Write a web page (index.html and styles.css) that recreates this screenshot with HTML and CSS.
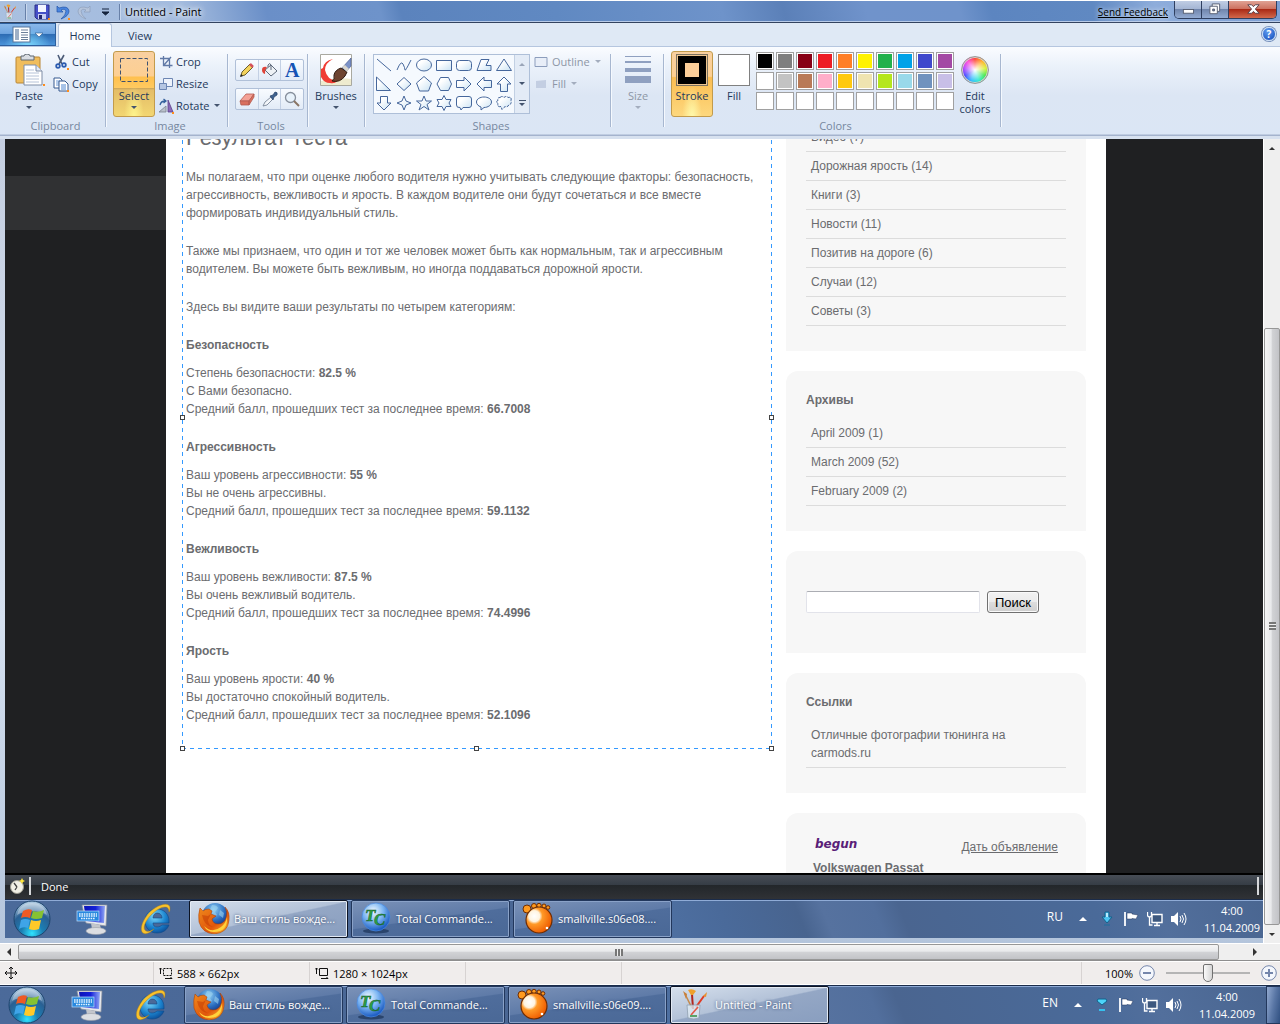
FILE: index.html
```
<!DOCTYPE html>
<html lang="en">
<head>
    <meta charset="UTF-8">
    <meta name="viewport" content="width=device-width, initial-scale=1.0">
    <title>Untitled - Paint</title>
    <link rel="stylesheet" href="styles.css">
</head>
<body>
    <!-- shared icons -->
    <svg class="sprites" aria-hidden="true">
        <defs>
            <radialGradient id="gOrb" cx="50%" cy="90%" r="85%">
                <stop offset="0" stop-color="#2fe4ff"/><stop offset=".35" stop-color="#1b7fb4"/><stop offset=".7" stop-color="#2a5f92"/><stop offset="1" stop-color="#a9c6de"/>
            </radialGradient>
            <linearGradient id="gScreen" x1="0" y1="0" x2="1" y2="0">
                <stop offset="0" stop-color="#0a14b8"/><stop offset=".55" stop-color="#1420d8"/><stop offset="1" stop-color="#8fa6f4"/>
            </linearGradient>
            <radialGradient id="gIe" cx="40%" cy="30%" r="75%">
                <stop offset="0" stop-color="#7fd8fa"/><stop offset=".6" stop-color="#1d86d0"/><stop offset="1" stop-color="#0b4d98"/>
            </radialGradient>
            <radialGradient id="gGlobe" cx="45%" cy="25%" r="70%">
                <stop offset="0" stop-color="#8fd0f4"/><stop offset=".6" stop-color="#2a6dc0"/><stop offset="1" stop-color="#14307c"/>
            </radialGradient>
            <linearGradient id="gFox" x1="0" y1="0" x2="1" y2="1">
                <stop offset="0" stop-color="#f08a1c"/><stop offset=".6" stop-color="#e0560c"/><stop offset="1" stop-color="#ffc832"/>
            </linearGradient>
            <radialGradient id="gTc" cx="40%" cy="30%" r="70%">
                <stop offset="0" stop-color="#f4fbff"/><stop offset=".5" stop-color="#7fb8f4"/><stop offset="1" stop-color="#1858c0"/>
            </radialGradient>
            <radialGradient id="gGom" cx="32%" cy="35%" r="70%">
                <stop offset="0" stop-color="#fff"/><stop offset=".3" stop-color="#fff4e0"/><stop offset=".45" stop-color="#ff9a28"/><stop offset="1" stop-color="#ee5c00"/>
            </radialGradient>
            <linearGradient id="gShape" x1="0" y1="0" x2="1" y2="1">
                <stop offset=".3" stop-color="#fff"/><stop offset="1" stop-color="#c9e2f3"/>
            </linearGradient>
        </defs>

        <symbol id="i-start" viewBox="0 0 38 38">
            <circle cx="19" cy="19" r="18" fill="url(#gOrb)" stroke="#1d456e"/>
            <path d="M4 15C6 6 12 3 19 3s13 3 15 12c-8-5-22-5-30 0z" fill="#fff" opacity=".35"/>
            <path d="M10 11q5-3 9-1l-2 8q-5-2-9 0z" fill="#ee5a24"/>
            <path d="M20 11q5 2 11-1l-2 8q-6 2-11 0z" fill="#86c232"/>
            <path d="M8 20q4-2 9 0l-2 8q-5-2-9 1z" fill="#3fa4e8"/>
            <path d="M18 20q5 2 10 0l-2 9q-5 2-10 0z" fill="#ffc928"/>
        </symbol>
        <symbol id="i-keys" viewBox="0 0 32 32">
            <path d="M6 2l25 0-1 21-20-3z" fill="#e6e8ec" stroke="#8b919c" stroke-width=".7"/>
            <path d="M8 3l21 0-1 17-18-2z" fill="url(#gScreen)"/>
            <path d="M15 20l9 2 1 4h-9z" fill="#c3c6cc"/>
            <ellipse cx="20" cy="28" rx="10" ry="3.500" fill="#dcdee2" stroke="#9a9ea6" stroke-width=".6"/>
            <rect x="1" y="8" width="22" height="10" fill="#2888de" stroke="#bfe0ff" stroke-width=".7"/>
            <path d="M3 11h18M3 13h18M5 15.500h14" stroke="#e5f4ff" stroke-width="1.300" stroke-dasharray="1.600 .8"/>
        </symbol>
        <symbol id="i-ie" viewBox="0 0 32 32">
            <path fill-rule="evenodd" fill="url(#gIe)" stroke="#0d4a8a" stroke-width=".6" d="M17 6c7 0 12 5 12 12v2H13c0 3 2 4 4 4 2 0 4-1 5-2h7c-2 5-6 8-12 8C10 30 5 25 5 18S10 6 17 6zm-4 9h9c0-3-2-5-5-5-2 0-4 2-4 5z"/>
            <path d="M3 30c-5-4 2-19 12-25C23 0 30 0 30 5c0 1 0 3-1 4 0-3-1-5-4-5-4 0-9 3-14 8C5 18 2 26 6 28c2 1 5 0 8-2-3 3-8 6-11 4z" fill="#f8c22c" stroke="#b57d0c" stroke-width=".4"/>
        </symbol>
        <symbol id="i-firefox" viewBox="0 0 32 32">
            <circle cx="17" cy="14" r="13" fill="url(#gGlobe)"/>
            <path d="M14 3q5 0 6 3l-3 4 2 3-3 2-5-5zM22 8l4 3-1 5-4-3z" fill="#9cd2ef" opacity=".6"/>
            <path d="M2 6l3 3q2-2 6-2l3 2-1 3 5 2-4 3q1 5 6 5 6 0 8-6 2-6-1-11 5 5 4 13-1 13-15 14Q4 31 1 20 0 12 2 6z" fill="url(#gFox)" stroke="#a63800" stroke-width=".5"/>
            <path d="M6 24q8 8 17 1 5-4 6-10 1 15-13 15-7 0-10-6z" fill="#ffd23c"/>
            <path d="M4 13l6 1 3-2-3 6q0 5 5 7-9-1-11-12z" fill="#c23c04" opacity=".55"/>
        </symbol>
        <symbol id="i-gom" viewBox="0 0 32 32">
            <g fill="#ff9a1e" stroke="#6e2d04" stroke-width="1"><circle cx="5" cy="7" r="4"/><circle cx="12" cy="4" r="2.500"/><circle cx="17" cy="3.500" r="2.200"/><circle cx="22" cy="4" r="2"/><circle cx="26" cy="5.500" r="1.800"/></g>
            <circle cx="17" cy="18" r="13" fill="url(#gGom)" stroke="#6e2d04" stroke-width="1.200"/>
            <circle cx="25" cy="26" r="1.300" fill="#fff"/>
        </symbol>
        <symbol id="i-paint" viewBox="0 0 32 32">
            <path d="M6 6l7 14" stroke="#c58a4c" stroke-width="1.600"/><path d="M4 3l4 3-1 5z" fill="#c9803c"/>
            <path d="M13 6l1 15" stroke="#b3261e" stroke-width="2"/><path d="M9 2q4-2 8 1l-3 4h-2z" fill="#efa02c"/>
            <path d="M25 8l-8 11" stroke="#e03a24" stroke-width="2"/><path d="M28 4l-1 5-3-1z" fill="#e8902c"/>
            <path d="M8 17h13l-1 13q-5 2-11 0z" fill="#dfeaf2" fill-opacity=".8" stroke="#8fa0b0" stroke-width=".8"/>
            <path d="M12 27l7-8" stroke="#e25848" stroke-width="1.600"/><path d="M11 28h7" stroke="#5ba368" stroke-width="2"/>
        </symbol>
        <symbol id="i-flag" viewBox="0 0 16 16">
            <path d="M2 1v14" stroke="#fff" stroke-width="1.800"/>
            <path d="M4 2h5v1l6 1-2 4-4-.5V8H4z" fill="#fff" stroke="#22365c" stroke-width=".5"/>
        </symbol>
        <symbol id="i-net" viewBox="0 0 16 16">
            <path d="M5 3.500h10v8H5z" fill="#3d587f" stroke="#fff" stroke-width="1.400"/>
            <path d="M7 14.500h6M10 12v2" stroke="#fff" stroke-width="1.400"/>
            <path d="M.5 1v3q0 2 2 2t2-2V1M2.500 6v8h3" fill="none" stroke="#fff" stroke-width="1.300"/>
        </symbol>
        <symbol id="i-sound" viewBox="0 0 16 16">
            <path d="M0 5h3l4-4v14l-4-4H0z" fill="#fff"/>
            <path d="M9 5q2 3 0 6M11 4q3 4 0 8M13 2q4 6 0 12" fill="none" stroke="#fff" stroke-width="1"/>
        </symbol>
        <symbol id="i-down" viewBox="0 0 16 16">
            <path d="M6 1h4v5h3l-5 6-5-6h3z" fill="#4cc4f2" stroke="#14628c"/><path d="M7 2h2v4H7z" fill="#b9ecff"/>
            <path d="M5 14h6" stroke="#1d6f9e"/>
        </symbol>
        <symbol id="i-funnel" viewBox="0 0 16 16">
            <path d="M4 2h8l1 2-5 4-5-4z" fill="#4cd4fa" stroke="#14628c"/><path d="M5 12h6v2H5z" fill="#35c0ee"/>
        </symbol>
    </svg>

    <header class="titlebar">
        <svg class="icon-16" viewBox="0 0 32 32"><use href="#i-paint"/></svg>
        <span class="title-sep"></span>
        <button class="quick" aria-label="Save">
            <svg class="icon-16" viewBox="0 0 16 16"><path d="M1 1h14v14H3l-2-2z" fill="#4650c8" stroke="#2a2f86"/><path d="M4 1h8v7H4z" fill="#f3f5ff"/><path d="M4 10h8v5H4z" fill="#c8cdf2"/><path d="M5 11h3v4H5z" fill="#23286e"/><path d="M14 14h2v2h-2z" fill="#ff8c1a"/></svg>
        </button>
        <button class="quick" aria-label="Undo">
            <svg class="icon-16" viewBox="0 0 16 16"><path d="M2 2v6h6L6 6q4-2 5 1 0 4-5 8 8-3 8-8-1-6-10-3z" fill="#4a86e0" stroke="#2454a8" stroke-width=".7"/><path d="M13 14h2v2h-2z" fill="#ff8c1a"/></svg>
        </button>
        <button class="quick" aria-label="Redo">
            <svg class="icon-16" viewBox="0 0 16 16"><path d="M14 2v6H8l2-2Q6 4 5 7q0 4 5 8-8-3-8-8 1-6 10-3z" fill="#b6c5dc" stroke="#8e9fba" stroke-width=".7"/></svg>
        </button>
        <button class="quick" aria-label="Customize toolbar">
            <svg class="icon-16" viewBox="0 0 16 16"><path d="M5 5h7M5 8h7L8.500 11z" stroke="#14233c" fill="#14233c"/></svg>
        </button>
        <span class="title-sep"></span>
        <h1 class="title">Untitled - Paint</h1>
        <a class="feedback" href="#feedback">Send Feedback</a>
        <div class="win-buttons">
            <button aria-label="Minimize"><svg viewBox="0 0 28 18"><rect x="9" y="9" width="11" height="4" fill="#fff" stroke="#555d70"/></svg></button>
            <button aria-label="Restore"><svg viewBox="0 0 28 18"><path d="M11 3h8v8h-8z" fill="#fff" stroke="#555d70"/><path d="M8.500 5.500h8v8h-8z" fill="#fff" stroke="#555d70"/><path d="M11.500 8.500h2v2h-2z" fill="#7488ae" stroke="#555d70"/></svg></button>
            <button class="close" aria-label="Close"><svg viewBox="0 0 48 18"><path d="M19 4h4l2 2 2-2h4l-4 4.500 4 4.500h-4l-2-2-2 2h-4l4-4.500z" fill="#fff" stroke="#56404a"/></svg></button>
        </div>
    </header>

    <nav class="tabs">
        <button class="app-menu" aria-label="Paint menu">
            <svg viewBox="0 0 32 18"><rect x="1" y="1" width="17" height="15" fill="#fff" stroke="#55749c"/><path d="M3 3h4v11H3z" fill="#9fb0c6"/><path d="M9 4h7M9 6.500h7M9 9h7M9 11.500h7M9 13.500h7" stroke="#6c7f99"/><path d="M23 7h8l-4 4z" fill="#fff" stroke="#27548c" stroke-width=".6"/></svg>
        </button>
        <button class="tab active">Home</button>
        <button class="tab">View</button>
        <button class="help" aria-label="Help">?</button>
    </nav>

    <section class="ribbon">
        <div class="group clipboard">
            <div class="group-body">
                <button class="big">
                    <svg class="icon-32" viewBox="0 0 32 32"><rect x="3" y="3" width="24" height="26" rx="1" fill="#f0bd5c" stroke="#b98635"/><path d="M8 5V2h3q0-2 3-2t3 2h4v4H8z" fill="#d9dde3" stroke="#5f6872"/><path d="M11 11h12l6 6v14H11z" fill="#fff" stroke="#7e8da6"/><path d="M23 11v6h6" fill="#e3eaf4" stroke="#7e8da6"/><path d="M13 16h8M13 19h13M13 22h13M13 25h13M13 28h13" stroke="#b6c3d8"/><path d="M30 30h2v2h-2z" fill="#ff8c1a"/></svg>
                    <span>Paste</span><i class="arrow"></i>
                </button>
                <div class="smalls">
                    <button class="small"><svg class="icon-16" viewBox="0 0 16 16"><path d="M5 1l4 9M11 1L6 10" stroke="#4c5c78" stroke-width="1.600"/><circle cx="5" cy="12" r="1.800" fill="none" stroke="#2c5cb0" stroke-width="1.800"/><circle cx="11" cy="11" r="1.800" fill="none" stroke="#2c5cb0" stroke-width="1.800"/><path d="M14 14h2v2h-2z" fill="#ff8c1a"/></svg>Cut</button>
                    <button class="small"><svg class="icon-16" viewBox="0 0 16 16"><path d="M1 2h6l2 2v8H1z" fill="#fff" stroke="#35598f"/><path d="M3 5h4M3 7h4M3 9h4" stroke="#6c9ad8"/><path d="M6 5h6l3 3v7H6z" fill="#fff" stroke="#35598f"/><path d="M8 9h5M8 11h5M8 13h5" stroke="#4f86d0"/><path d="M14 14h2v2h-2z" fill="#ff8c1a"/></svg>Copy</button>
                </div>
            </div>
            <div class="group-label">Clipboard</div>
        </div>
        <div class="sep"></div>

        <div class="group image">
            <div class="group-body">
                <button class="big split pressed">
                    <svg class="icon-32" viewBox="0 0 32 32"><rect x="2.500" y="4.500" width="27" height="23" fill="none" stroke="#3d5170" stroke-dasharray="4 2"/></svg>
                    <span>Select</span><i class="arrow"></i>
                </button>
                <div class="smalls">
                    <button class="small"><svg class="icon-16" viewBox="0 0 16 16"><path d="M5.500 2v9.500h9M2 4.500h9.500V14M6 11l7-8" fill="none" stroke="#6079a6" stroke-width="1.300"/></svg>Crop</button>
                    <button class="small"><svg class="icon-16" viewBox="0 0 16 16"><path d="M5.500 2.500h9v8h-9z" fill="#eef3fb" stroke="#6d86b3"/><path d="M1.500 7.500h7v6h-7z" fill="#b5c6e2" stroke="#6d86b3"/></svg>Resize</button>
                    <button class="small"><svg class="icon-16" viewBox="0 0 16 16"><path d="M8 14V8l-7 6z" fill="#b9c0ca" stroke="#78818e" stroke-width=".8"/><path d="M10 14V2l5 12z" fill="#8b6ab8" stroke="#59408a" stroke-width=".8"/><path d="M2 7q1-4 5-4M5.500 1l2.500 2-2.500 2" fill="none" stroke="#34609c" stroke-width="1.300"/><path d="M14 14h2v2h-2z" fill="#ff8c1a"/></svg>Rotate<i class="arrow"></i></button>
                </div>
            </div>
            <div class="group-label">Image</div>
        </div>
        <div class="sep"></div>

        <div class="group tools">
            <div class="group-body">
                <div class="tool-row">
                    <button aria-label="Pencil"><svg class="icon-16" viewBox="0 0 16 16"><path d="M2 14l1-4 8-8 3 3-8 8z" fill="#f3d35c" stroke="#6b5f2d"/><path d="M11 2l3 3" stroke="#d4525c" stroke-width="2.500"/><path d="M1 15l1-3 2 2z" fill="#222"/></svg></button>
                    <button aria-label="Fill with color"><svg class="icon-16" viewBox="0 0 16 16"><path d="M9 3l6 6-6 5-6-6z" fill="#eef2f6" stroke="#5f6b7c"/><path d="M9 8V3q-1-3-3 0v2" fill="none" stroke="#5f6b7c"/><path d="M0 8q0-4 5-3-2 2-2 7-3-1-3-4z" fill="#e0443a"/></svg></button>
                    <button aria-label="Text"><span class="text-tool">A</span></button>
                </div>
                <div class="tool-row">
                    <button aria-label="Eraser"><svg class="icon-16" viewBox="0 0 16 16"><path d="M1 10l6-7h8l-5 7z" fill="#f4a196" stroke="#b45c50" stroke-width=".8"/><path d="M1 10h9v4H2zM10 10l5-7v3l-5 8z" fill="#d9705f" stroke="#b45c50" stroke-width=".8"/></svg></button>
                    <button aria-label="Color picker"><svg class="icon-16" viewBox="0 0 16 16"><path d="M1 15l2-4 6-5 2 2-6 6z" fill="#f3f6fa" stroke="#7a8798" stroke-width=".9"/><path d="M8 5l3-1 2-3q3 0 2 3l-3 2-1 3z" fill="#3f628f" stroke="#274268" stroke-width=".7"/></svg></button>
                    <button aria-label="Magnifier"><svg class="icon-16" viewBox="0 0 16 16"><circle cx="6.500" cy="6.500" r="5" fill="#e8f2fb" stroke="#868f9c" stroke-width="1.300"/><path d="M10 10l5 5" stroke="#8a7565" stroke-width="2"/></svg></button>
                </div>
            </div>
            <div class="group-label">Tools</div>
        </div>
        <div class="sep"></div>

        <div class="group brushes">
            <div class="group-body">
                <button class="big">
                    <svg class="icon-32" viewBox="0 0 32 32"><path d="M.5.500h31v31H.5z" fill="#fff" stroke="#a9a9a0"/><path d="M1 27q15-4 30-2v6H1z" fill="#eeebcf"/><path d="M13 5Q4 7 3 14l-2 1v8q3 6 9 6 5 1 7-2Q7 26 5 16q0-7 8-11z" fill="#f03c34"/><path d="M31 4v8l-5 6-4-4z" fill="#7c93c8" stroke="#3f548c" stroke-width=".6"/><path d="M21 14l6 4-2 4q-5 7-13 5 3-2 2-6 1-5 7-7z" fill="#6e4430" stroke="#2e1a10"/><path d="M22 13l5 5 2-3-4-4z" fill="#d8d5cd"/></svg>
                    <span>Brushes</span><i class="arrow"></i>
                </button>
            </div>
        </div>
        <div class="sep"></div>

        <div class="group shapes">
            <div class="group-body">
                <div class="gallery">
                    <div class="shape-grid">
                        <button aria-label="Line"><svg viewBox="0 0 18 18"><path d="M2 3l14 12"/></svg></button>
                        <button aria-label="Curve"><svg viewBox="0 0 18 18"><path fill="none" d="M2 14Q6 4 8 8t2 6 6-10"/></svg></button>
                        <button aria-label="Oval"><svg viewBox="0 0 18 18"><ellipse cx="9" cy="9" rx="7.500" ry="6"/></svg></button>
                        <button aria-label="Rectangle"><svg viewBox="0 0 18 18"><path d="M1.500 4.500h15v10h-15z"/></svg></button>
                        <button aria-label="Rounded rectangle"><svg viewBox="0 0 18 18"><rect x="1.500" y="4.500" width="15" height="10" rx="3"/></svg></button>
                        <button aria-label="Polygon"><svg viewBox="0 0 18 18"><path d="M2 14.500L6 3.500h8L11 9.500h5v5z"/></svg></button>
                        <button aria-label="Triangle"><svg viewBox="0 0 18 18"><path d="M9 3l7.500 11.500h-15z"/></svg></button>
                        <button aria-label="Right triangle"><svg viewBox="0 0 18 18"><path d="M1.500 2v13.500h14z"/></svg></button>
                        <button aria-label="Diamond"><svg viewBox="0 0 18 18"><path d="M9 2.500L16 9l-7 6.500L2 9z"/></svg></button>
                        <button aria-label="Pentagon"><svg viewBox="0 0 18 18"><path d="M9 1.500L16.500 8l-3 8h-9l-3-8z"/></svg></button>
                        <button aria-label="Hexagon"><svg viewBox="0 0 18 18"><path d="M5.500 2.500h8L16.500 9l-3 6.500h-8L2 9z"/></svg></button>
                        <button aria-label="Right arrow"><svg viewBox="0 0 18 18"><path d="M1.500 5.500H9V2l7 7-7 7v-3.500H1.500z"/></svg></button>
                        <button aria-label="Left arrow"><svg viewBox="0 0 18 18"><path d="M16.500 5.500H9V2L2 9l7 7v-3.500h7.500z"/></svg></button>
                        <button aria-label="Up arrow"><svg viewBox="0 0 18 18"><path d="M5.500 16.500V9H2l7-7 7 7h-3.500v7.500z"/></svg></button>
                        <button aria-label="Down arrow"><svg viewBox="0 0 18 18"><path d="M5.500 2.500V9H2l7 7 7-7h-3.500V2.500z"/></svg></button>
                        <button aria-label="Four-point star"><svg viewBox="0 0 18 18"><path d="M9 2l2 5 5 2-5 2-2 5-2-5-5-2 5-2z"/></svg></button>
                        <button aria-label="Five-point star"><svg viewBox="0 0 18 18"><path d="M9 2l2 5h5.500L12 10.500l2 5.500-5-3.500L4 16l2-5.500L1.500 7H7z"/></svg></button>
                        <button aria-label="Six-point star"><svg viewBox="0 0 18 18"><path d="M9 1.500l2 4h5L14 9l2 3.500h-5l-2 4-2-4H2L4 9 2 5.500h5z"/></svg></button>
                        <button aria-label="Rounded callout"><svg viewBox="0 0 18 18"><path d="M4 2.500h10q2.500 0 2.500 2.500v6q0 2.500-2.500 2.500H8L6 16l-1-2.500Q1.500 14 1.500 11V5Q1.500 2.500 4 2.500z"/></svg></button>
                        <button aria-label="Oval callout"><svg viewBox="0 0 18 18"><path d="M9 3c4 0 7.500 2 7.500 5S13 13.500 9 13.500L6 16v-3C3 12 1.500 10 1.500 8 1.500 5 5 3 9 3z"/></svg></button>
                        <button aria-label="Cloud callout"><svg viewBox="0 0 18 18"><path stroke-dasharray="3 1" d="M5 3.500q2-2 4 0 2-2 4 0 4-1 3 3 1 4-2 4-1 3-4 2-2 2-3 3l-1-3q-4 1-3-3-3-2 0-3-1-3 2-3z"/></svg></button>
                    </div>
                    <div class="gallery-scroll">
                        <button aria-label="Scroll up"><i class="arrow up"></i></button>
                        <button aria-label="Scroll down"><i class="arrow"></i></button>
                        <button class="more" aria-label="More shapes"><i class="arrow"></i></button>
                    </div>
                </div>
                <div class="smalls disabled">
                    <button class="small" disabled><svg class="icon-16" viewBox="0 0 16 16"><path d="M2 3.500h12v9H2z" fill="#e8eef8" stroke="#8c9dbc"/></svg>Outline<i class="arrow"></i></button>
                    <button class="small" disabled><svg class="icon-16" viewBox="0 0 16 16"><path d="M3 5l10-1v8H3z" fill="#c3cee2"/></svg>Fill<i class="arrow"></i></button>
                </div>
            </div>
            <div class="group-label">Shapes</div>
        </div>
        <div class="sep"></div>

        <div class="group size">
            <div class="group-body">
                <button class="big disabled" disabled>
                    <svg class="icon-32" viewBox="0 0 32 32"><path d="M3 2h26v1H3zM3 7h26v2H3zM3 14h26v4H3zM3 22h26v7H3z" fill="#8fa0c0"/></svg>
                    <span>Size</span><i class="arrow"></i>
                </button>
            </div>
        </div>
        <div class="sep"></div>

        <div class="group colors">
            <div class="group-body">
                <button class="big pressed"><i class="well stroke-well"></i><span>Stroke</span></button>
                <button class="big"><i class="well"></i><span>Fill</span></button>
                <div class="palette">
                    <button class="swatch black" aria-label="Black"></button>
                    <button class="swatch gray" aria-label="Gray"></button>
                    <button class="swatch darkred" aria-label="Dark red"></button>
                    <button class="swatch red" aria-label="Red"></button>
                    <button class="swatch orange" aria-label="Orange"></button>
                    <button class="swatch yellow" aria-label="Yellow"></button>
                    <button class="swatch green" aria-label="Green"></button>
                    <button class="swatch turquoise" aria-label="Turquoise"></button>
                    <button class="swatch indigo" aria-label="Indigo"></button>
                    <button class="swatch purple" aria-label="Purple"></button>
                    <button class="swatch" aria-label="White"></button>
                    <button class="swatch lightgray" aria-label="Light gray"></button>
                    <button class="swatch brown" aria-label="Brown"></button>
                    <button class="swatch rose" aria-label="Rose"></button>
                    <button class="swatch gold" aria-label="Gold"></button>
                    <button class="swatch tan" aria-label="Light yellow"></button>
                    <button class="swatch lime" aria-label="Lime"></button>
                    <button class="swatch lightblue" aria-label="Light turquoise"></button>
                    <button class="swatch bluegray" aria-label="Blue-gray"></button>
                    <button class="swatch lavender" aria-label="Lavender"></button>
                    <button class="swatch" aria-label="Custom 1"></button>
                    <button class="swatch" aria-label="Custom 2"></button>
                    <button class="swatch" aria-label="Custom 3"></button>
                    <button class="swatch" aria-label="Custom 4"></button>
                    <button class="swatch" aria-label="Custom 5"></button>
                    <button class="swatch" aria-label="Custom 6"></button>
                    <button class="swatch" aria-label="Custom 7"></button>
                    <button class="swatch" aria-label="Custom 8"></button>
                    <button class="swatch" aria-label="Custom 9"></button>
                    <button class="swatch" aria-label="Custom 10"></button>
                </div>
                <button class="big"><i class="wheel"></i><span>Edit<br>colors</span></button>
            </div>
            <div class="group-label">Colors</div>
        </div>
        <div class="sep"></div>
    </section>

    <main class="workspace">
        <div class="canvas">
            <div class="page">
                <div class="side-band"></div>
                <div class="site">
                    <article class="article">
                        <h2>Результат теста</h2>
                        <p>Мы полагаем, что при оценке любого водителя нужно учитывать следующие факторы: безопасность, агрессивность, вежливость и ярость. В каждом водителе они будут сочетаться и все вместе формировать индивидуальный стиль.</p>
                        <p>Также мы признаем, что один и тот же человек может быть как нормальным, так и агрессивным водителем. Вы можете быть вежливым, но иногда поддаваться дорожной ярости.</p>
                        <p>Здесь вы видите ваши результаты по четырем категориям:</p>
                        <h3>Безопасность</h3>
                        <p>Степень безопасности: <b>82.5 %</b><br>С Вами безопасно.<br>Средний балл, прошедших тест за последнее время: <b>66.7008</b></p>
                        <h3>Агрессивность</h3>
                        <p>Ваш уровень агрессивности: <b>55 %</b><br>Вы не очень агрессивны.<br>Средний балл, прошедших тест за последнее время: <b>59.1132</b></p>
                        <h3>Вежливость</h3>
                        <p>Ваш уровень вежливости: <b>87.5 %</b><br>Вы очень вежливый водитель.<br>Средний балл, прошедших тест за последнее время: <b>74.4996</b></p>
                        <h3>Ярость</h3>
                        <p>Ваш уровень ярости: <b>40 %</b><br>Вы достаточно спокойный водитель.<br>Средний балл, прошедших тест за последнее время: <b>52.1096</b></p>
                        <div class="selection">
                            <i class="handle left-mid"></i><i class="handle right-mid"></i>
                            <i class="handle left-bottom"></i><i class="handle mid-bottom"></i><i class="handle right-bottom"></i>
                        </div>
                    </article>
                    <aside class="sidebar">
                        <section class="panel continued">
                            <ul>
                                <li>Видео (7)</li>
                                <li>Дорожная ярость (14)</li>
                                <li>Книги (3)</li>
                                <li>Новости (11)</li>
                                <li>Позитив на дороге (6)</li>
                                <li>Случаи (12)</li>
                                <li>Советы (3)</li>
                            </ul>
                        </section>
                        <section class="panel">
                            <h4>Архивы</h4>
                            <ul>
                                <li>April 2009 (1)</li>
                                <li>March 2009 (52)</li>
                                <li>February 2009 (2)</li>
                            </ul>
                        </section>
                        <form class="panel search">
                            <input type="text" aria-label="Поиск">
                            <button type="button">Поиск</button>
                        </form>
                        <section class="panel">
                            <h4>Ссылки</h4>
                            <ul>
                                <li>Отличные фотографии тюнинга на carmods.ru</li>
                            </ul>
                        </section>
                        <section class="panel ads">
                            <div class="ads-head">
                                <span class="begun">begun</span>
                                <a href="#ad">Дать объявление</a>
                            </div>
                            <a class="ad-title" href="#passat">Volkswagen Passat</a>
                        </section>
                    </aside>
                </div>
            </div>
            <div class="browser-status">
                <svg class="icon-16" viewBox="0 0 16 16"><circle cx="8" cy="9" r="6.500" fill="#f2f0e6" stroke="#9b9a90"/><path d="M8 9L5 5M8 9l-2 3" stroke="#444" stroke-width="1.300"/><path d="M13 0l1 2 2 1-2 1-1 2-1-2-2-1 2-1z" fill="#ffe63c"/></svg>
                <span class="bar"></span>
                <span class="status-text">Done</span>
                <span class="bar"></span>
            </div>
            <div class="taskbar inner">
                <button class="pin" aria-label="Start"><svg class="orb" viewBox="0 0 38 38"><use href="#i-start"/></svg></button>
                <button class="pin" aria-label="On-screen keyboard"><svg viewBox="0 0 32 32"><use href="#i-keys"/></svg></button>
                <button class="pin" aria-label="Internet Explorer"><svg viewBox="0 0 32 32"><use href="#i-ie"/></svg></button>
                <button class="task active"><svg viewBox="0 0 32 32"><use href="#i-firefox"/></svg>Ваш стиль вожде...</button>
                <button class="task">
                    <svg viewBox="0 0 32 32"><ellipse cx="16" cy="29" rx="13" ry="2.500" fill="#12294d" opacity=".6"/><circle cx="16" cy="15" r="14" fill="url(#gTc)" stroke="#4a8ade" stroke-width=".7"/><text x="5" y="19" class="tc-letter">T</text><text x="14" y="23" class="tc-letter">C</text></svg>
                    Total Commande...
                </button>
                <button class="task"><svg viewBox="0 0 32 32"><use href="#i-gom"/></svg>smallville.s06e08....</button>
                <div class="tray">
                    <span class="lang">RU</span>
                    <i class="tray-arrow"></i>
                    <svg viewBox="0 0 16 16"><use href="#i-down"/></svg>
                    <svg viewBox="0 0 16 16"><use href="#i-flag"/></svg>
                    <svg viewBox="0 0 16 16"><use href="#i-net"/></svg>
                    <svg viewBox="0 0 16 16"><use href="#i-sound"/></svg>
                    <div class="clock">4:00<br>11.04.2009</div>
                    <span class="show-desktop"></span>
                </div>
            </div>
        </div>
        <div class="scroll vertical">
            <button aria-label="Scroll up"><i class="arrow up"></i></button>
            <div class="track"></div>
            <div class="thumb"><i class="grip"></i></div>
            <button aria-label="Scroll down"><i class="arrow"></i></button>
        </div>
    </main>

    <div class="scroll horizontal">
        <button aria-label="Scroll left"><i class="arrow left"></i></button>
        <div class="thumb"><i class="grip"></i></div>
        <div class="track"></div>
        <button aria-label="Scroll right"><i class="arrow right"></i></button>
    </div>

    <footer class="statusbar">
        <div class="cell"><svg class="icon-12" viewBox="0 0 12 12"><path d="M6 0v12M0 6h12M4 2l2-2 2 2M4 10l2 2 2-2M2 4L0 6l2 2M10 4l2 2-2 2" fill="none" stroke="#111"/></svg></div>
        <div class="cell"><svg class="icon-14" viewBox="0 0 14 12"><path d="M1.500 1v6M0 2.500L1.500 1 3 2.500M6 11.500h7M11.500 10l1.500 1.500" fill="none" stroke="#111"/><path d="M4.500 1.500h8v7h-8z" fill="none" stroke="#111" stroke-dasharray="2 1"/></svg>588 × 662px</div>
        <div class="cell"><svg class="icon-14" viewBox="0 0 14 12"><path d="M1.500 1v6M0 2.500L1.500 1 3 2.500M6 11.500h7M11.500 10l1.500 1.500M4.500 1.500h8v7h-8z" fill="none" stroke="#111"/></svg>1280 × 1024px</div>
        <div class="cell"></div>
        <div class="cell rest"></div>
        <div class="zoom">
            <label for="zoom">100%</label>
            <button aria-label="Zoom out"><svg viewBox="0 0 16 16"><circle cx="8" cy="8" r="7.300" fill="#f4f7fc" stroke="#7486ab"/><path d="M4 8h8" stroke="#7486ab" stroke-width="2"/></svg></button>
            <input id="zoom" type="range" min="0" max="100" value="50">
            <button aria-label="Zoom in"><svg viewBox="0 0 16 16"><circle cx="8" cy="8" r="7.300" fill="#f4f7fc" stroke="#7486ab"/><path d="M4 8h8M8 4v8" stroke="#7486ab" stroke-width="2"/></svg></button>
        </div>
    </footer>

    <div class="taskbar">
        <button class="pin" aria-label="Start"><svg class="orb" viewBox="0 0 38 38"><use href="#i-start"/></svg></button>
        <button class="pin" aria-label="On-screen keyboard"><svg viewBox="0 0 32 32"><use href="#i-keys"/></svg></button>
        <button class="pin" aria-label="Internet Explorer"><svg viewBox="0 0 32 32"><use href="#i-ie"/></svg></button>
        <button class="task"><svg viewBox="0 0 32 32"><use href="#i-firefox"/></svg>Ваш стиль вожде...</button>
        <button class="task">
            <svg viewBox="0 0 32 32"><ellipse cx="16" cy="29" rx="13" ry="2.500" fill="#12294d" opacity=".6"/><circle cx="16" cy="15" r="14" fill="url(#gTc)" stroke="#4a8ade" stroke-width=".7"/><text x="5" y="19" class="tc-letter">T</text><text x="14" y="23" class="tc-letter">C</text></svg>
            Total Commande...
        </button>
        <button class="task"><svg viewBox="0 0 32 32"><use href="#i-gom"/></svg>smallville.s06e09....</button>
        <button class="task active"><svg viewBox="0 0 32 32"><use href="#i-paint"/></svg>Untitled - Paint</button>
        <div class="tray">
            <span class="lang">EN</span>
            <i class="tray-arrow"></i>
            <svg viewBox="0 0 16 16"><use href="#i-funnel"/></svg>
            <svg viewBox="0 0 16 16"><use href="#i-flag"/></svg>
            <svg viewBox="0 0 16 16"><use href="#i-net"/></svg>
            <svg viewBox="0 0 16 16"><use href="#i-sound"/></svg>
            <div class="clock">4:00<br>11.04.2009</div>
            <span class="show-desktop"></span>
        </div>
    </div>
</body>
</html>
```
FILE: styles.css
```
* {
    box-sizing: border-box;
}
body {
    margin: 0;
    height: 100vh;
    display: flex;
    flex-direction: column;
    overflow: hidden;
    font-family: "Open Sans", "Noto Sans", sans-serif;
    font-size: 11px;
    color: #1e395b;
}
button {
    margin: 0;
    padding: 0;
    border: none;
    background: none;
    font: inherit;
    color: inherit;
}
svg {
    display: block;
    flex: none;
}
.sprites {
    position: absolute;
    width: 0;
    height: 0;
}
.tc-letter {
    font: italic bold 17px "Liberation Serif", serif;
    fill: #2aa045;
    stroke: #17602f;
    stroke-width: .5px;
    text-shadow: none;
}
.icon-12 {
    width: 12px;
    height: 12px;
}
.icon-14 {
    width: 14px;
    height: 12px;
}
.icon-16 {
    width: 16px;
    height: 16px;
}
.icon-32 {
    width: 32px;
    height: 32px;
}
.arrow {
    display: block;
    width: 0;
    height: 0;
    border: 3px solid transparent;
    border-top-color: #44546e;
    border-bottom: none;
}
.arrow.up {
    border-top: none;
    border-bottom: 3px solid #9aa5b8;
}
.arrow.left {
    border: 4px solid transparent;
    border-right-color: #333;
    border-left: none;
}
.arrow.right {
    border: 4px solid transparent;
    border-left-color: #333;
    border-right: none;
}

/* title bar */
.titlebar {
    flex: none;
    height: 23px;
    display: flex;
    align-items: center;
    padding-left: 2px;
    border-top: 1px solid #fff;
    border-bottom: 1px solid #33435f;
    box-shadow: inset 0 -1px 0 #b8cbe8;
    background: linear-gradient(75deg, #a9c0e0 0, #a3bbde 180px, #6a8fc8 260px, #6e93ca 370px, #5b83bd 390px, #6089c2 540px, #6e93ca 700px, #5b80b8 760px, #7093cb 840px, #6f93cb 930px, #5c85c0 960px, #6089c2 1060px, #8eaddb 1120px, #7c9ed2 100%);
}
.title-sep {
    width: 2px;
    height: 16px;
    margin: 0 7px;
    border-left: 1px solid #6780a8;
    border-right: 1px solid #c9d8ee;
}
.quick {
    width: 16px;
    margin-right: 5px;
}
.quick + .title-sep {
    margin: 0 4px 0 1px;
}
.title {
    margin: 0;
    font-size: 11px;
    font-weight: normal;
    color: #000;
    text-shadow: 0 0 6px #fff, 0 0 6px #fff;
}
.feedback {
    margin-left: auto;
    margin-right: 6px;
    font-size: 10px;
    color: #000;
    text-shadow: 0 0 5px #fff;
}
.win-buttons {
    display: flex;
    align-self: flex-start;
    margin-right: 3px;
    border: 1px solid #2f3f60;
    border-top: none;
    border-radius: 0 0 5px 5px;
    overflow: hidden;
}
.win-buttons button {
    width: 27px;
    height: 17px;
    border-right: 1px solid #2f3f60;
    background: linear-gradient(#c0cde4 0, #a5b6d4 45%, #7186ad 50%, #93abd2 100%);
}
.win-buttons .close {
    width: 47px;
    border: none;
    background: linear-gradient(#e0a294 0, #cd7260 45%, #aa2a16 50%, #d2694c 100%);
}
.win-buttons svg {
    height: 17px;
    width: 100%;
}

/* ribbon tabs */
.tabs {
    flex: none;
    height: 24px;
    display: flex;
    align-items: flex-end;
    padding-right: 4px;
    background: #dfe9f5;
    border-bottom: 1px solid #b5c6df;
}
.app-menu {
    width: 56px;
    height: 23px;
    display: flex;
    align-items: center;
    justify-content: center;
    border: 1px solid #2d5f9e;
    border-left: none;
    background: radial-gradient(ellipse at 50% 110%, #7fdcff 0, rgba(102, 196, 244, 0) 60%), linear-gradient(#8ab8ea 0, #6ea4e0 45%, #2d6cb4 50%, #4a92d8 100%);
}
.app-menu svg {
    width: 32px;
    height: 18px;
}
.tab {
    height: 22px;
    width: 54px;
}
.tab.active {
    margin: 0 1px -1px 2px;
    height: 24px;
    border: 1px solid #b5c6df;
    border-bottom: none;
    border-radius: 3px 3px 0 0;
    background: #fbfdff;
}
.help {
    width: 14px;
    height: 14px;
    margin: 0 0 5px auto;
    border: 1px solid #c8dcf5;
    border-radius: 50%;
    background: radial-gradient(circle at 40% 30%, #5f9cf0, #1148b8);
    color: #fff;
    font-weight: bold;
    font-size: 10px;
    line-height: 12px;
    box-shadow: 0 0 0 1px #7a93bd;
}

/* ribbon */
.ribbon {
    flex: none;
    height: 92px;
    display: flex;
    background: linear-gradient(#fafcff 0, #eaf1fa 20px, #dce6f4 48px, #dbe6f5 87px, #a4b3cd 88px, #a4b3cd 89px, #d7e1ef 89px);
}
.sep {
    width: 2px;
    height: 73px;
    margin-top: 7px;
    border-left: 1px solid #a7b7d0;
    border-right: 1px solid #f5f9fe;
}
.group {
    display: flex;
    flex-direction: column;
    padding-top: 4px;
}
.group-body {
    display: flex;
    height: 66px;
}
.group-label {
    margin-top: 2px;
    padding-left: 6px;
    line-height: 14px;
    text-align: center;
    color: #76879f;
}
.clipboard {
    width: 105px;
}
.image {
    width: 120px;
}
.tools {
    width: 78px;
}
.brushes {
    width: 55px;
}
.shapes {
    width: 244px;
}
.size {
    width: 51px;
}
.colors {
    width: 335px;
}
.group-body {
    padding-left: 6px;
}
.clipboard .group-body {
    padding-left: 8px;
}
.size .group-body {
    padding-left: 5px;
}
.big {
    width: 42px;
    height: 66px;
    padding-top: 3px;
    display: flex;
    flex-direction: column;
    align-items: center;
    line-height: 13px;
    white-space: nowrap;
}
.big span {
    margin-top: 3px;
}
.big .arrow {
    margin-top: 4px;
}
.big.pressed {
    padding-top: 2px;
    border: 1px solid #c29b4c;
    border-radius: 3px;
    background: radial-gradient(ellipse at 50% 105%, #fffcae 0, rgba(255, 240, 120, 0) 35%), linear-gradient(#f9d0a0 0, #fdcf92 38%, #fbbd52 40%, #fdd87e 100%);
}
.big.split {
    background: radial-gradient(ellipse at 50% 105%, #fff68e 0, rgba(255, 240, 120, 0) 35%), linear-gradient(#f9d0a0 0, #fdcf92 24px, #ffc04e 25px, #ffca60 36px, #c9a256 36px, #e4bd68 38px, #f2d672 100%);
}
.smalls {
    padding-left: 3px;
}
.small {
    height: 22px;
    padding-bottom: 1px;
    display: flex;
    align-items: center;
    gap: 3px;
}
.image .small {
    gap: 2px;
}
.disabled {
    color: #8d96a6;
}
.disabled .arrow {
    border-top-color: #a3adbe;
}
.small .arrow {
    margin-left: 2px;
}
.tools .group-body {
    flex-direction: column;
    gap: 7px;
    padding-top: 8px;
}
.tool-row {
    display: flex;
    width: 69px;
    height: 22px;
    border: 1px solid #b0c0d8;
    border-radius: 2px;
    background: linear-gradient(#f8fbff, #e2ebf7);
}
.tool-row button {
    flex: 1;
    display: flex;
    align-items: center;
    justify-content: center;
    border-right: 1px solid #c3d0e4;
}
.tool-row button:last-child {
    border-right: none;
}
.text-tool {
    font: bold 20px "Liberation Serif", serif;
    color: #1553b5;
}
.gallery {
    display: flex;
    width: 157px;
    height: 60px;
    margin: 3px 0 0 1px;
    border: 1px solid #aebfd8;
    background: #f5f9fe;
}
.shape-grid {
    flex: 1;
    display: grid;
    grid-template-columns: repeat(7, 20px);
    grid-auto-rows: 19px;
}
.shape-grid button {
    display: flex;
    align-items: center;
    justify-content: center;
}
.shape-grid svg {
    width: 18px;
    height: 18px;
    fill: url(#gShape);
    stroke: #46679c;
}
.gallery-scroll {
    width: 15px;
    display: flex;
    flex-direction: column;
    border-left: 1px solid #c2d0e3;
    background: #e3ebf6;
}
.gallery-scroll button {
    flex: 1;
    display: flex;
    flex-direction: column;
    align-items: center;
    justify-content: center;
}
.gallery-scroll .more::before {
    content: "";
    width: 7px;
    height: 1px;
    margin-bottom: 2px;
    background: #44546e;
}
.well {
    width: 32px;
    height: 32px;
    border: 1px solid #808080;
    background: #fff;
}
.stroke-well {
    border: 1px solid #7d7360;
    background: linear-gradient(#fdcf9a, #fdcf9a) center / 14px 14px no-repeat, linear-gradient(#000, #000) center / 28px 28px no-repeat, #f0c68f;
}
.palette {
    display: grid;
    grid-template-columns: repeat(10, 18px);
    grid-auto-rows: 18px;
    gap: 2px;
    padding: 1px 0 0 1px;
}
.swatch {
    border: 1px solid #a0a0a0;
    background: #fff;
    box-shadow: inset 0 0 0 1px #fff;
}
.black { background: #000; }
.gray { background: #7f7f7f; }
.darkred { background: #880015; }
.red { background: #ed1c24; }
.orange { background: #ff7f27; }
.yellow { background: #fff200; }
.green { background: #22b14c; }
.turquoise { background: #00a2e8; }
.indigo { background: #3f48cc; }
.purple { background: #a349a4; }
.lightgray { background: #c3c3c3; }
.brown { background: #b97a57; }
.rose { background: #ffaec9; }
.gold { background: #ffc90e; }
.tan { background: #efe4b0; }
.lime { background: #b5e61d; }
.lightblue { background: #99d9ea; }
.bluegray { background: #7092be; }
.lavender { background: #c8bfe7; }
.wheel {
    width: 28px;
    height: 28px;
    margin: 2px 0;
    border: 1px solid #9a9a9a;
    border-radius: 50%;
    box-shadow: inset 0 0 0 1px #d8d4cc;
    background: radial-gradient(circle, #fff 0, rgba(255, 255, 255, 0) 65%), conic-gradient(#ff3c2c, #ffb020, #d8f02c, #3ce84c, #28e8d0, #28b8ff, #4448ff, #b43cff, #ff48d8, #ff3c2c);
}

/* drawing area */
.workspace {
    flex: 1;
    min-height: 0;
    display: flex;
    padding-left: 5px;
    background: linear-gradient(#c5cfe1, #d5e0ef 60%, #b4c5dc);
}
.canvas {
    flex: 1;
    min-width: 0;
    margin-bottom: 5px;
    display: flex;
    flex-direction: column;
    overflow: hidden;
}
.page {
    position: relative;
    flex: 1;
    min-height: 0;
    overflow: hidden;
    padding-left: 4px;
    background: #1f2022;
    font: 12px/18px "Liberation Sans", Arial, sans-serif;
    color: #6b6c6f;
}
.side-band {
    position: absolute;
    top: 37px;
    left: 0;
    right: 50%;
    height: 54px;
    background: #303133;
}
.site {
    position: relative;
    width: 940px;
    min-height: 100%;
    margin: 0 auto;
    padding-right: 20px;
    display: flex;
    align-items: flex-start;
    justify-content: space-between;
    background: #fff;
}
/* both columns are scrolled a little under the ribbon */
.article {
    position: relative;
    width: 606px;
    margin-top: -15px;
    padding: 0 10px 5px 20px;
}
.article h2 {
    margin: 0 0 16px;
    font-size: 22px;
    line-height: 28px;
    font-weight: normal;
}
.article h3 {
    margin: 0 0 10px;
    font-size: 12px;
}
.article p {
    margin: 0 0 20px;
}
.selection {
    position: absolute;
    top: 0;
    right: 0;
    bottom: 0;
    left: 16px;
    background:
        repeating-linear-gradient(#3399ff 0, #3399ff 4px, transparent 4px, transparent 8px) left / 1px 100% no-repeat,
        repeating-linear-gradient(#3399ff 0, #3399ff 4px, transparent 4px, transparent 8px) right / 1px 100% no-repeat,
        repeating-linear-gradient(90deg, #3399ff 0, #3399ff 4px, transparent 4px, transparent 8px) bottom / 100% 1px no-repeat;
}
.handle {
    position: absolute;
    width: 5px;
    height: 5px;
    border: 1px solid #444;
    background: #fff;
}
.left-mid,
.right-mid {
    top: 291px;
}
.left-mid,
.left-bottom {
    left: -2px;
}
.right-mid,
.right-bottom {
    right: -2px;
}
.left-bottom,
.mid-bottom,
.right-bottom {
    bottom: -2px;
}
.mid-bottom {
    left: 50%;
    margin-left: -3px;
}
.sidebar {
    width: 300px;
    margin-top: -16px;
}
.panel {
    margin-bottom: 20px;
    padding: 20px 20px 25px;
    border-radius: 12px 12px 0 0;
    background: #f7f7f7;
}
.panel.continued {
    padding-top: 0;
}
.panel h4 {
    margin: 0 0 10px;
    font-size: 12px;
}
.panel ul {
    margin: 0;
    padding: 0;
    list-style: none;
}
.panel li {
    padding: 5px;
    border-bottom: 1px solid #dcdcdc;
}
.search {
    display: flex;
    gap: 7px;
    padding: 40px 20px;
}
.search input {
    width: 174px;
    height: 22px;
    border: 1px solid #e2e3ea;
    border-top-color: #abadb3;
    border-radius: 2px;
}
.search button {
    width: 52px;
    height: 22px;
    border: 1px solid #707070;
    border-radius: 3px;
    box-shadow: inset 0 0 0 1px #fafafa;
    background: linear-gradient(#f2f2f2 0, #ebebeb 50%, #dddddd 50%, #cfcfcf 100%);
    font: 13px "Liberation Sans", Arial, sans-serif;
    color: #000;
}
.ads a {
    color: #6b6c6f;
}
.ads-head {
    display: flex;
    justify-content: space-between;
    align-items: center;
    padding: 4px 8px 0 9px;
    margin-bottom: 3px;
}
.begun {
    padding-bottom: 5px;
    font: italic bold 12px "DejaVu Sans", sans-serif;
    color: #5a1e78;
}
.ad-title {
    margin-left: 7px;
    font-weight: bold;
}
.browser-status {
    flex: none;
    height: 26px;
    display: flex;
    align-items: center;
    padding: 0 4px 2px;
    border-top: 2px solid #000;
    background: linear-gradient(#474d56 0, #363d46 40%, #22262a 41%, #303236 100%);
    color: #fff;
}
.bar {
    width: 2px;
    height: 18px;
    margin-left: 4px;
    background: #d5d7da;
}
.status-text {
    flex: 1;
    margin-left: 10px;
}

/* taskbars */
.taskbar {
    flex: none;
    height: 39px;
    display: flex;
    gap: 3px;
    overflow: hidden;
    border-top: 1px solid #1b2c4a;
    box-shadow: inset 0 1px 0 #8fabd6;
    background: linear-gradient(68deg, #4b6a9a 0, #4a6693 48%, #4f71a3 50%, #4a6a9a 56%, #48648f 62%, #56729f 64%, #526f9d 68%, #4a6590 70%, #4a6a99 85%, #526f9c 90%, #48648f 100%);
    color: #fff;
}
/* the captured desktop is wider than the visible canvas */
.taskbar.inner {
    margin-right: -22px;
}
.pin {
    width: 61px;
    display: flex;
    align-items: center;
    justify-content: center;
    padding-bottom: 1px;
}
.pin:first-child {
    width: 53px;
}
.pin svg {
    width: 32px;
    height: 32px;
}
.pin .orb {
    width: 38px;
    height: 38px;
}
.task {
    width: 159px;
    display: flex;
    align-items: center;
    gap: 4px;
    padding: 0 0 2px 8px;
    border: 1px solid #22375c;
    box-shadow: inset 0 0 0 1px #8aa2c8;
    border-radius: 2px;
    background: linear-gradient(172deg, #7b92b8 0, #5f7ba8 48%, #4f6d9c 50%, #4a6896 100%);
    white-space: nowrap;
    text-shadow: 0 0 3px #2a3f66;
}
.task svg {
    width: 32px;
    height: 32px;
}
.task.active {
    background: linear-gradient(168deg, #d5dfec 0, #b3c2d8 48%, #94a7c5 50%, #899ebf 100%);
    border-color: #0c1424;
    box-shadow: inset 0 0 0 1px #e3eaf4;
}
.tray {
    margin-left: auto;
    display: flex;
    align-items: center;
    gap: 8px;
}
.tray svg {
    width: 16px;
    height: 16px;
}
.lang {
    margin-right: 8px;
    font-size: 12px;
    line-height: 14px;
    padding-bottom: 4px;
}
.tray-arrow {
    border: 4px solid transparent;
    border-top: none;
    border-bottom-color: #fff;
    margin-right: 4px;
}
.clock {
    width: 62px;
    margin-left: 6px;
    text-align: center;
    line-height: 17px;
}
.show-desktop {
    width: 14px;
    height: 38px;
    border: 1px solid #22375c;
    border-right: none;
    background: linear-gradient(100deg, #93aad0, #5a77a6 50%, #2f4f80);
}

/* scroll bars */
.scroll {
    display: flex;
    flex: none;
    background: #efefef;
}
.scroll.vertical {
    width: 17px;
    flex-direction: column;
    border-left: 1px solid #fff;
}
.scroll.horizontal {
    height: 18px;
    padding-right: 16px;
    border-top: 1px solid #fff;
    border-bottom: 1px solid #8e8e8e;
}
.scroll button {
    flex: none;
    width: 16px;
    height: 18px;
    display: flex;
    align-items: center;
    justify-content: center;
}
.horizontal button {
    width: 18px;
    height: 16px;
}
.vertical .arrow {
    border-top-color: #333;
    border-bottom-color: #333;
}
.thumb {
    display: flex;
    align-items: center;
    justify-content: center;
    border: 1px solid #979797;
    border-radius: 2px;
}
.vertical .track {
    flex: 171;
}
.vertical .thumb {
    flex: 597;
    background: linear-gradient(90deg, #f5f5f5 0, #e8e9eb 45%, #d2d3d6 50%, #c2c3c7 100%);
}
.horizontal .thumb {
    flex: 1201;
    background: linear-gradient(#f5f5f5 0, #e8e9eb 45%, #d2d3d6 50%, #c2c3c7 100%);
}
.horizontal .track {
    flex: 27;
}
.grip {
    width: 7px;
    height: 8px;
    background: repeating-linear-gradient(#777 0, #777 2px, #eee 2px, #eee 3px);
}
.horizontal .grip {
    width: 8px;
    height: 7px;
    background: repeating-linear-gradient(90deg, #777 0, #777 2px, #eee 2px, #eee 3px);
}

/* status bar */
.statusbar {
    flex: none;
    height: 24px;
    display: flex;
    border-top: 1px solid #fff;
    border-bottom: 1px solid #fff;
    background: #f0edec;
    color: #000;
}
.cell {
    width: 156px;
    display: flex;
    align-items: center;
    gap: 4px;
    padding-left: 5px;
    border-right: 1px solid #d7d3d2;
}
.cell:first-child {
    width: 154px;
}
.cell.rest {
    flex: 1;
}
.zoom {
    width: 198px;
    display: flex;
    align-items: center;
    justify-content: flex-end;
    gap: 6px;
    padding-right: 3px;
}
.zoom svg {
    width: 16px;
    height: 16px;
}
.zoom input {
    width: 94px;
    margin: 0;
    appearance: none;
    background: linear-gradient(#b5b5b5, #b5b5b5) center / 84px 2px no-repeat;
}
.zoom input::-webkit-slider-thumb {
    appearance: none;
    width: 10px;
    height: 18px;
    border: 1px solid #707070;
    border-radius: 2px 2px 5px 5px;
    background: linear-gradient(90deg, #fafafa, #d5d5d5);
}
```
